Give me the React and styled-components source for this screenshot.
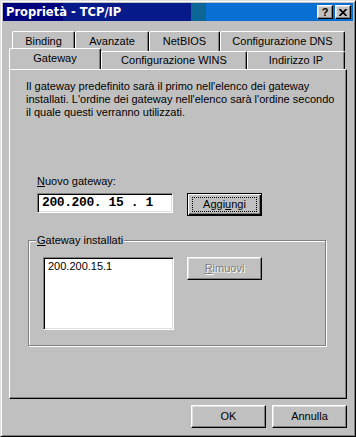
import React from 'react';
import styled, { createGlobalStyle } from 'styled-components';

const FACE = '#c0c0c0';

const GlobalStyle = createGlobalStyle`
  html, body {
    margin: 0;
    padding: 0;
    background: ${FACE};
  }
  body {
    font-family: "Liberation Sans", Arial, sans-serif;
    font-size: 11px;
    color: #000;
  }
`;

const Window = styled.div`
  box-sizing: border-box;
  width: 356px;
  height: 437px;
  background: ${FACE};
  border: 1px solid;
  border-color: #dfdfdf #000 #000 #dfdfdf;
  box-shadow: inset 1px 1px #fff, inset -1px -1px #808080;
  padding: 2px;
  display: flex;
  flex-direction: column;
`;

const TitleBar = styled.div`
  height: 18px;
  display: flex;
  align-items: center;
  padding: 0 2px 0 2px;
  background: linear-gradient(to right,
    #00007f 0px, #00007f 60px,
    #061a8a 60px, #061a8a 188px,
    #0c6796 188px, #0c6796 203px,
    #0a6fd2 203px, #0a6fd2 100%);
`;

const Title = styled.div`
  flex: 1;
  color: #fff;
  font-family: "DejaVu Sans", Verdana, sans-serif;
  font-weight: bold;
  font-size: 11.5px;
  line-height: 18px;
  padding-left: 1px;
  white-space: nowrap;
`;

const CaptionButtons = styled.div`
  display: flex;
  gap: 2px;
`;

const CaptionButton = styled.div`
  box-sizing: border-box;
  width: 16px;
  height: 14px;
  background: ${FACE};
  border: 1px solid;
  border-color: #fff #000 #000 #fff;
  box-shadow: inset -1px -1px #808080, inset 1px 1px #dfdfdf;
  display: flex;
  align-items: center;
  justify-content: center;
  font-weight: bold;
  font-size: 11px;
  line-height: 12px;
`;

const Body = styled.div`
  flex: 1;
  display: flex;
  flex-direction: column;
  padding: 10px 6px 0 6px;
`;

const TabRow = styled.div`
  display: flex;
  align-items: flex-end;
  position: relative;
  z-index: ${(p) => p.$layer};
  margin-left: ${(p) => p.$indent}px;
  margin-top: ${(p) => p.$overlap}px;
`;

const Tab = styled.div`
  box-sizing: border-box;
  width: ${(p) => p.$width}px;
  height: ${(p) => (p.$active ? 22 : p.$tall ? 20 : 18)}px;
  margin-bottom: ${(p) => (p.$active ? -1 : 0)}px;
  position: relative;
  z-index: ${(p) => (p.$active ? 3 : 0)};
  background: ${FACE};
  border-top: 1px solid #fff;
  border-left: 1px solid #fff;
  border-right: 1px solid #000;
  border-radius: 2px 2px 0 0;
  box-shadow: inset -1px 0 #808080;
  display: flex;
  align-items: center;
  justify-content: center;
  padding-bottom: ${(p) => (p.$active ? 3 : 0)}px;
  white-space: nowrap;
  line-height: 13px;
`;

const Panel = styled.div`
  box-sizing: border-box;
  width: 338px;
  height: 330px;
  position: relative;
  z-index: 2;
  background: ${FACE};
  border: 1px solid;
  border-color: #fff #000 #000 #fff;
  box-shadow: inset -1px -1px #808080;
  padding: 10px 0 0 16px;
  display: flex;
  flex-direction: column;
`;

const Description = styled.div`
  line-height: 13px;
  white-space: nowrap;
`;

const Section = styled.div`
  margin-left: ${(p) => p.$indent}px;
  margin-top: ${(p) => p.$gap}px;
`;

const Label = styled.div`
  line-height: 13px;
`;

const Key = styled.span`
  text-decoration: underline;
`;

const Row = styled.div`
  display: flex;
  align-items: flex-start;
  margin-top: ${(p) => p.$gap || 0}px;
`;

const Sunken = styled.div`
  box-sizing: border-box;
  background: #fff;
  border: 1px solid;
  border-color: #808080 #fff #fff #808080;
  box-shadow: inset 1px 1px #000, inset -1px -1px #dfdfdf;
`;

const IpField = styled(Sunken)`
  width: 136px;
  height: 20px;
  padding-left: 4px;
  font-family: "Liberation Mono", "DejaVu Sans Mono", monospace;
  font-weight: bold;
  font-size: 13px;
  letter-spacing: -0.4px;
  line-height: 18px;
  white-space: pre;
`;

const Button = styled.div`
  box-sizing: border-box;
  width: 75px;
  height: 23px;
  margin-left: ${(p) => p.$offset || 0}px;
  background: ${FACE};
  border: 1px solid;
  border-color: ${(p) => (p.$default ? '#000' : '#fff #000 #000 #fff')};
  box-shadow: ${(p) =>
    p.$default
      ? 'inset 1px 1px #fff, inset -1px -1px #000, inset -2px -2px #808080'
      : 'inset -1px -1px #808080, inset 1px 1px #dfdfdf'};
  display: flex;
  align-items: center;
  justify-content: center;
  line-height: 13px;
  color: ${(p) => (p.$disabled ? '#808080' : '#000')};
  text-shadow: ${(p) => (p.$disabled ? '1px 1px #fff' : 'none')};
`;

const Focus = styled.span`
  box-sizing: border-box;
  width: 65px;
  height: 15px;
  border: 1px dotted #000;
  display: flex;
  align-items: center;
  justify-content: center;
`;

const GroupBox = styled.fieldset`
  box-sizing: border-box;
  width: 298px;
  margin: 18px 0 0 2px;
  padding: 10px 0 15px 14px;
  min-inline-size: 0;
  border: 1px solid #808080;
  box-shadow: inset 1px 1px #fff, 1px 1px #fff;
  display: flex;
  align-items: flex-start;
`;

const Legend = styled.legend`
  margin-left: -7px;
  padding: 0 1px;
  line-height: 13px;
  background: ${FACE};
`;

const ListBox = styled(Sunken)`
  width: 131px;
  height: 73px;
  padding: 2px 0 0 4px;
  line-height: 13px;
`;

const Footer = styled.div`
  display: flex;
  justify-content: flex-end;
  gap: 6px;
  margin-top: 6px;
`;

const row1 = [
  ['Binding', 63],
  ['Avanzate', 74],
  ['NetBIOS', 71],
  ['Configurazione DNS', 125],
];

const row2 = [
  ['Gateway', 92, true],
  ['Configurazione WINS', 146],
  ['Indirizzo IP', 98],
];

const CloseGlyph = () => (
  <svg width="8" height="7" viewBox="0 0 8 7">
    <path d="M0.5 0 L7.5 7 M7.5 0 L0.5 7" stroke="#000" strokeWidth="1.7" />
  </svg>
);

export default function App() {
  return (
    <>
      <GlobalStyle />
      <Window>
        <TitleBar>
          <Title>Proprietà - TCP/IP</Title>
          <CaptionButtons>
            <CaptionButton>?</CaptionButton>
            <CaptionButton><CloseGlyph /></CaptionButton>
          </CaptionButtons>
        </TitleBar>
        <Body>
          <TabRow $layer={0} $indent={3} $overlap={0}>
            {row1.map(([label, w]) => (
              <Tab key={label} $width={w} $tall>{label}</Tab>
            ))}
          </TabRow>
          <TabRow $layer={1} $indent={0} $overlap={-3}>
            {row2.map(([label, w, active]) => (
              <Tab key={label} $width={w} $active={active}>{label}</Tab>
            ))}
          </TabRow>
          <Panel>
            <Description>
              Il gateway predefinito sarà il primo nell'elenco dei gateway<br />
              installati. L'ordine dei gateway nell'elenco sarà l'ordine secondo<br />
              il quale questi verranno utilizzati.
            </Description>
            <Section $indent={11} $gap={56}>
              <Label><Key>N</Key>uovo gateway:</Label>
              <Row $gap={5}>
                <IpField>200.200. 15 . 1</IpField>
                <Button $default $offset={14}>
                  <Focus>Aggi<Key>u</Key>ngi</Focus>
                </Button>
              </Row>
            </Section>
            <GroupBox>
              <Legend><Key>G</Key>ateway installati</Legend>
              <ListBox>200.200.15.1</ListBox>
              <Button $disabled $offset={13}><span><Key>R</Key>imuovi</span></Button>
            </GroupBox>
          </Panel>
          <Footer>
            <Button>OK</Button>
            <Button>Annulla</Button>
          </Footer>
        </Body>
      </Window>
    </>
  );
}
